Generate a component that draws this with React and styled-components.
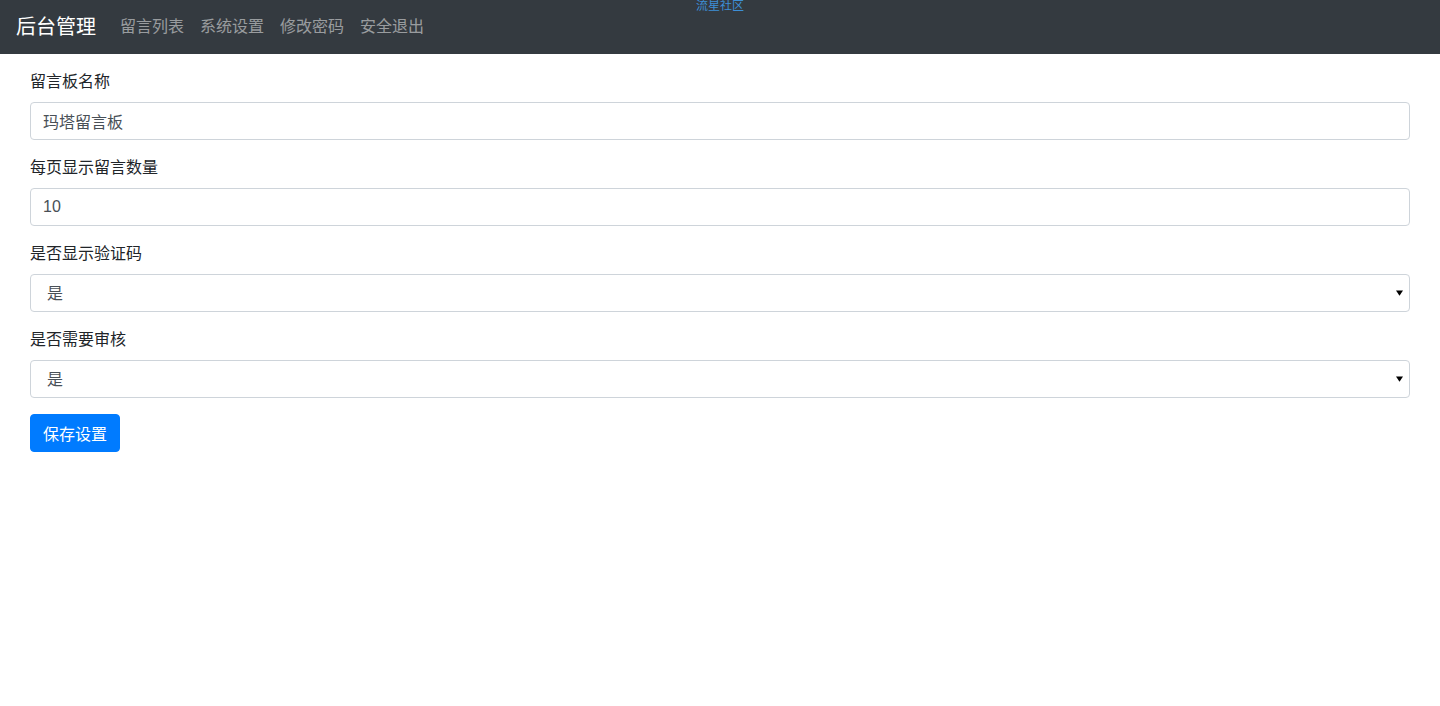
import React, { useState } from "react";
import styled, { createGlobalStyle } from "styled-components";

const GlobalStyle = createGlobalStyle`
  body {
    margin: 0;
    background: #ffffff;
    font-family: "Liberation Sans", "Noto Sans CJK SC", sans-serif;
    color: #212529;
  }
`;

const App = () => {
  const [name, setName] = useState("玛塔留言板");
  const [pageSize, setPageSize] = useState("10");
  const [captcha, setCaptcha] = useState("1");
  const [review, setReview] = useState("1");

  return (
    <>
      <GlobalStyle />
      <Navbar>
        <Brand>后台管理</Brand>
        <NavList>
          <NavLink>留言列表</NavLink>
          <NavLink>系统设置</NavLink>
          <NavLink>修改密码</NavLink>
          <NavLink>安全退出</NavLink>
        </NavList>
        <TopTag>流星社区</TopTag>
      </Navbar>
      <Main>
        <FormGroup>
          <Label>留言板名称</Label>
          <Input value={name} onChange={(e) => setName(e.target.value)} />
        </FormGroup>
        <FormGroup>
          <Label>每页显示留言数量</Label>
          <Input value={pageSize} onChange={(e) => setPageSize(e.target.value)} />
        </FormGroup>
        <FormGroup>
          <Label>是否显示验证码</Label>
          <SelectWrap>
            <Select value={captcha} onChange={(e) => setCaptcha(e.target.value)}>
              <option value="1">是</option>
              <option value="0">否</option>
            </Select>
            <Arrow viewBox="0 0 8 6">
              <path d="M0 0h8L4 6z" fill="#000" />
            </Arrow>
          </SelectWrap>
        </FormGroup>
        <FormGroup>
          <Label>是否需要审核</Label>
          <SelectWrap>
            <Select value={review} onChange={(e) => setReview(e.target.value)}>
              <option value="1">是</option>
              <option value="0">否</option>
            </Select>
            <Arrow viewBox="0 0 8 6">
              <path d="M0 0h8L4 6z" fill="#000" />
            </Arrow>
          </SelectWrap>
        </FormGroup>
        <Button>保存设置</Button>
      </Main>
    </>
  );
};

const Navbar = styled.nav`
  position: relative;
  height: 54px;
  box-sizing: border-box;
  padding: 0 16px;
  display: flex;
  align-items: center;
  background-color: #343a40;
`;

const Brand = styled.a`
  margin-right: 16px;
  font-size: 20px;
  line-height: 30px;
  color: #ffffff;
  cursor: pointer;
`;

const NavList = styled.div`
  display: flex;
  align-items: center;
`;

const NavLink = styled.a`
  padding: 0 8px;
  font-size: 16px;
  line-height: 24px;
  color: rgba(255, 255, 255, 0.5);
  cursor: pointer;
`;

const TopTag = styled.span`
  position: absolute;
  top: 0;
  left: 50%;
  transform: translateX(-50%);
  font-size: 12px;
  line-height: 13px;
  color: #3d8fd6;
`;

const Main = styled.main`
  padding: 16px 30px;
`;

const FormGroup = styled.div`
  margin-bottom: 16px;
`;

const Label = styled.label`
  display: block;
  margin-bottom: 8px;
  font-size: 16px;
  line-height: 24px;
  color: #212529;
`;

const Input = styled.input`
  display: block;
  width: 100%;
  height: 38px;
  box-sizing: border-box;
  padding: 6px 12px;
  font-family: inherit;
  font-size: 16px;
  color: #495057;
  background: #ffffff;
  border: 1px solid #ced4da;
  border-radius: 4px;
  outline: none;
`;

const SelectWrap = styled.div`
  position: relative;
`;

const Select = styled.select`
  display: block;
  width: 100%;
  height: 38px;
  box-sizing: border-box;
  padding: 6px 16px;
  font-family: inherit;
  font-size: 16px;
  color: #495057;
  background: #ffffff;
  border: 1px solid #ced4da;
  border-radius: 4px;
  appearance: none;
  outline: none;
`;

const Arrow = styled.svg`
  position: absolute;
  right: 7px;
  top: 16px;
  width: 7px;
  height: 6px;
  pointer-events: none;
`;

const Button = styled.button`
  height: 38px;
  padding: 0 12px;
  font-family: inherit;
  font-size: 16px;
  color: #ffffff;
  background: #007bff;
  border: 1px solid #007bff;
  border-radius: 4px;
  cursor: pointer;
`;

export default App;
